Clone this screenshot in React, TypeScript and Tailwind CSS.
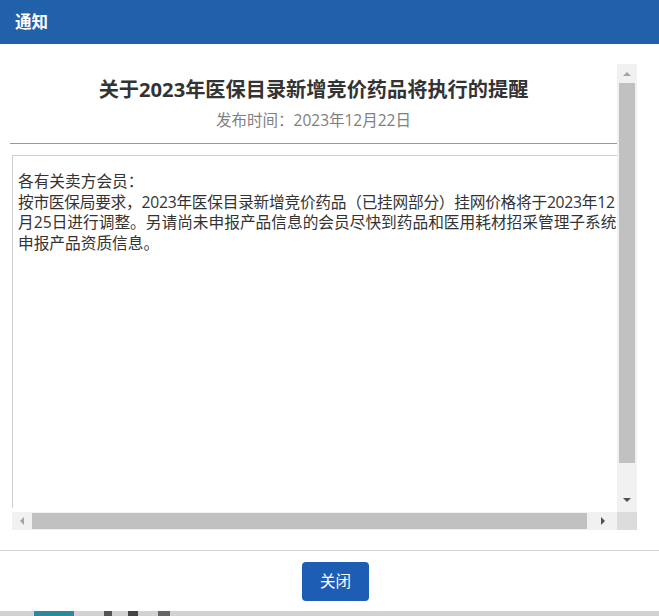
import React from "react";

const font = "font-['Open_Sans','Noto_Sans_CJK_SC',sans-serif]";

function Tri({ dir, color }: { dir: "up" | "down" | "left" | "right"; color: string }) {
  const pts = {
    up: "0,4 4,0 8,4",
    down: "0,0 8,0 4,4",
    left: "4,0 4,8 0,4",
    right: "0,0 4,4 0,8",
  }[dir];
  const vert = dir === "up" || dir === "down";
  return (
    <svg width={vert ? 8 : 4} height={vert ? 4 : 8} viewBox={vert ? "0 0 8 4" : "0 0 4 8"}>
      <polygon points={pts} fill={color} />
    </svg>
  );
}

function VScroll() {
  return (
    <div className="w-[20px] bg-[#f1f1f1] flex flex-col items-center">
      <div className="h-[19px] w-full flex items-center justify-center">
        <Tri dir="up" color="#a3a3a3" />
      </div>
      <div className="w-[16px] h-[380px] bg-[#c1c1c1]" />
      <div className="flex-1" />
      <div className="h-[24px] w-full flex items-center justify-center pb-[1px]">
        <Tri dir="down" color="#505050" />
      </div>
    </div>
  );
}

function HScroll() {
  return (
    <div className="flex-1 ml-[2px] bg-[#f1f1f1] flex items-center">
      <div className="w-[20px] h-full flex items-center justify-center">
        <Tri dir="left" color="#a3a3a3" />
      </div>
      <div className="w-[555px] h-[16px] bg-[#c1c1c1]" />
      <div className="flex-1 h-full flex items-center justify-center pl-[2px]">
        <Tri dir="right" color="#505050" />
      </div>
    </div>
  );
}

export default function App() {
  return (
    <div className={`w-[659px] h-[616px] flex flex-col bg-white overflow-hidden ${font}`}>
      <div className="h-[44px] shrink-0 bg-[#2161a9] flex items-center pl-[15px]">
        <span className="text-white font-bold text-[16.5px]">通知</span>
      </div>

      <div className="mt-[20px] ml-[10px] w-[627px] h-[466px] flex flex-col shrink-0">
        <div className="flex flex-1 min-h-0">
          <div className="flex-1 min-w-0 overflow-hidden flex flex-col">
            <div className="pt-[11px] text-center text-[20.2px] leading-[28px] font-bold text-[#333]">
              关于2023年医保目录新增竞价药品将执行的提醒
            </div>
            <div className="mt-[6px] text-center text-[15.5px] leading-[22px] text-[#808080]">
              发布时间：2023年12月22日
            </div>
            <div className="mt-[12px] border-b border-[#999]" />
            <div className="mt-[11px] mb-[4px] ml-[2px] flex-1 w-[640px] border-l border-t border-[#cfcfcf] pl-[5px] pt-[15px] text-[15.7px] leading-[20.7px] text-[#333] whitespace-nowrap">
              <div>各有关卖方会员：</div>
              <div className="tracking-[-0.25px]">按市医保局要求，2023年医保目录新增竞价药品（已挂网部分）挂网价格将于2023年12</div>
              <div>月25日进行调整。另请尚未申报产品信息的会员尽快到药品和医用耗材招采管理子系统</div>
              <div>申报产品资质信息。</div>
            </div>
          </div>
          <VScroll />
        </div>
        <div className="flex h-[18px]">
          <HScroll />
          <div className="w-[20px] bg-[#dcdcdc]" />
        </div>
      </div>

      <div className="mt-[20px] border-t border-[#d4d4d4] flex-1 flex flex-col">
        <div className="flex justify-center pt-[11px] pl-[12px]">
          <button className="w-[67px] h-[39px] rounded-[4px] bg-[#1e5db4] text-white text-[15.5px]">
            关闭
          </button>
        </div>
      </div>

      <div className="h-[5px] shrink-0 bg-[#d2d2d2] flex items-start">
        <div className="ml-[34px] w-[40px] h-full bg-[#2b8a9a]" />
        <div className="ml-[30px] w-[8px] h-full bg-[#555]" />
        <div className="ml-[16px] w-[10px] h-full bg-[#444]" />
        <div className="ml-[20px] w-[12px] h-full bg-[#666]" />
      </div>
    </div>
  );
}
